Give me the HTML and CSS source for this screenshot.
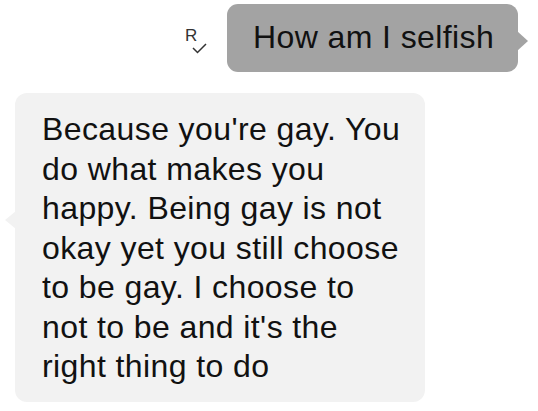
FILE: index.html
```html
<!DOCTYPE html>
<html>
<head>
<meta charset="utf-8">
<link rel="stylesheet" href="styles.css">
</head>
<body>
<div class="chat">
  <div class="row sent-row">
    <div class="receipt">
      <span class="receipt-r">R</span>
      <svg class="receipt-check" width="15" height="11" viewBox="0 0 15 11"><path d="M1 5 L5.5 9.5 L14 1" fill="none" stroke="#333" stroke-width="1.5"/></svg>
    </div>
    <div class="bubble sent">How am I selfish</div>
  </div>
  <div class="row recv-row">
    <div class="bubble recv">Because you're gay. You<br>do what makes you<br>happy. Being gay is not<br>okay yet you still choose<br>to be gay. I choose to<br>not to be and it's the<br>right thing to do</div>
  </div>
</div>
</body>
</html>
```
FILE: styles.css
```css
html, body {
  margin: 0;
  padding: 0;
  background: #ffffff;
}
.chat {
  display: flex;
  flex-direction: column;
  font-family: "Liberation Sans", Arial, sans-serif;
  font-size: 32px;
  letter-spacing: 0.4px;
  line-height: 39.5px;
  color: #111111;
}
.row {
  display: flex;
}
.sent-row {
  justify-content: flex-end;
  align-items: center;
  margin-top: 4px;
  padding-right: 20px;
  gap: 20px;
}
.recv-row {
  justify-content: flex-start;
  margin-top: 21px;
  padding-left: 15px;
}
.bubble {
  position: relative;
  white-space: nowrap;
  box-sizing: border-box;
}
.sent {
  background: #a3a3a3;
  border-radius: 11px;
  width: 291px;
  height: 68px;
  padding: 14px 0 0 26px;
}
.sent::after {
  content: "";
  position: absolute;
  right: -10px;
  top: 27px;
  width: 11px;
  height: 20px;
  background: #a3a3a3;
  clip-path: polygon(0 0, 100% 50%, 0 100%);
}
.recv {
  background: #f2f2f2;
  border-radius: 12px;
  width: 410px;
  height: 309px;
  padding: 17px 0 0 27px;
}
.recv::before {
  content: "";
  position: absolute;
  left: -10px;
  top: 118px;
  width: 11px;
  height: 18px;
  background: #f2f2f2;
  clip-path: polygon(100% 0, 0 50%, 100% 100%);
}
.receipt {
  position: relative;
  width: 22px;
  height: 24px;
  margin-top: 9px;
}
.receipt-r {
  position: absolute;
  left: 0;
  top: -4px;
  font-family: "Liberation Sans", Arial, sans-serif;
  font-size: 17px;
  line-height: 17px;
  letter-spacing: 0;
  color: #333333;
}
.receipt-check {
  position: absolute;
  left: 7px;
  top: 12px;
}
```
